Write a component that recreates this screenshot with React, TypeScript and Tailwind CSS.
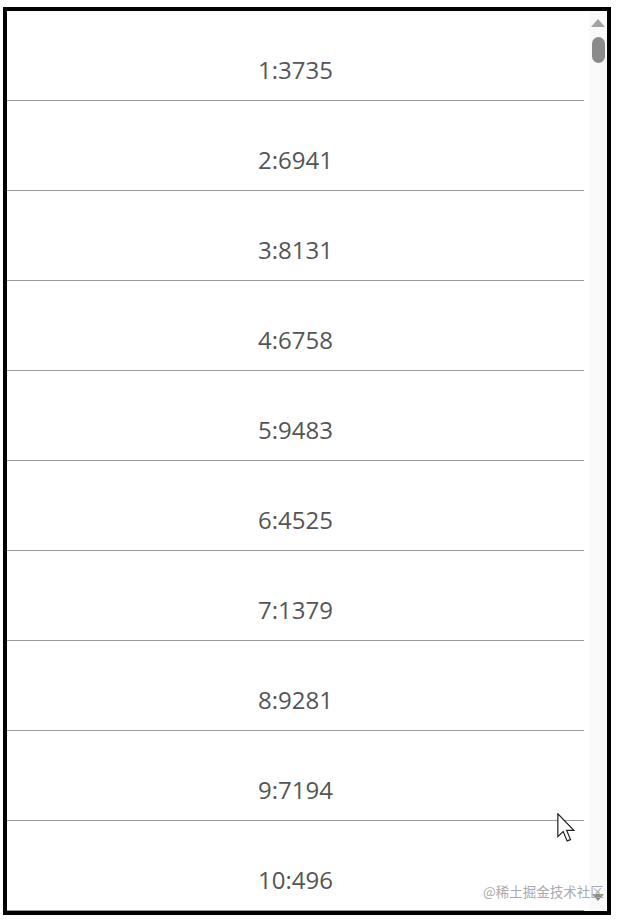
const items = [3735, 6941, 8131, 6758, 9483, 4525, 1379, 9281, 7194, 496]

export default function App() {
  return (
    <div className="w-[620px] h-[922px] bg-white pt-[7px] pl-[3px]">
      <div className="relative flex w-[608px] h-[908px] border-4 border-black bg-white overflow-hidden">
        {/* list */}
        <div className="w-[577px] shrink-0">
          {items.map((n, i) => (
            <div
              key={i}
              className="h-[90px] border-b border-[#9a9a9a] pt-[43px] text-center text-[24px] leading-[32px] text-[#555555]"
              style={{ fontFamily: '"Open Sans", "Noto Sans", sans-serif' }}
            >
              {i + 1}:{n}
            </div>
          ))}
        </div>

        {/* scrollbar */}
        <div className="ml-[5px] w-[18px] shrink-0 bg-[#f9f9f9] flex flex-col items-center">
          <div className="mt-[8px] w-0 h-0 border-l-[7px] border-r-[7px] border-b-[8px] border-l-transparent border-r-transparent border-b-[#a3a3a3]"></div>
          <div className="mt-[10px] w-[13px] h-[26px] rounded-full bg-[#8a8a8a]"></div>
          <div className="mt-auto mb-[10px] w-0 h-0 border-l-[6px] border-r-[6px] border-t-[7px] border-l-transparent border-r-transparent border-t-[#8a8a8a]"></div>
        </div>

        {/* watermark */}
        <div
          className="absolute left-[476px] top-[872px] text-[13.5px] leading-[16px] text-[#aaaaaa]"
          style={{ fontFamily: '"Noto Sans CJK SC", "Noto Sans", sans-serif' }}
        >
          @稀土掘金技术社区
        </div>

        {/* mouse cursor */}
        <svg
          className="absolute left-[550px] top-[802px]"
          width="20"
          height="29"
          viewBox="0 0 13 19"
        >
          <path
            d="M0.5 0.5 L0.5 15.5 L4 12.2 L6.6 18.3 L8.8 17.4 L6.3 11.4 L11 11.4 Z"
            fill="#fff"
            stroke="#222"
            strokeWidth="0.8"
            strokeLinejoin="miter"
          />
        </svg>
      </div>
    </div>
  )
}
